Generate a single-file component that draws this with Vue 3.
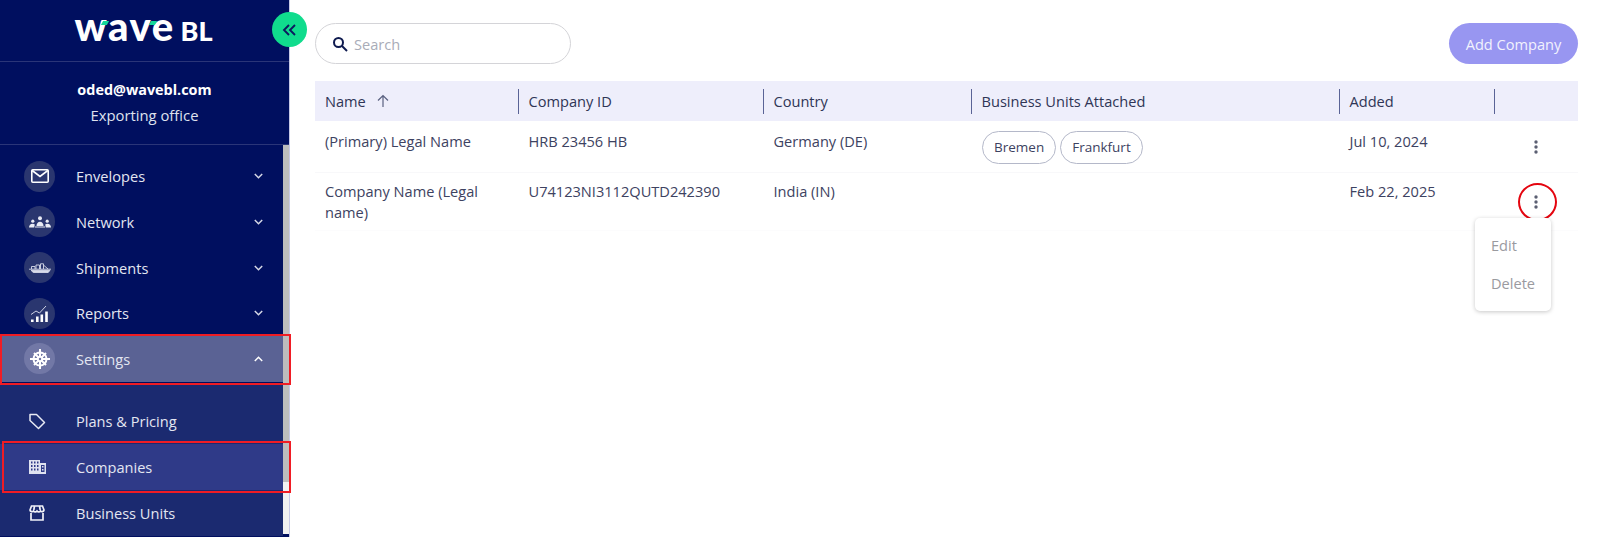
<script setup>
const upper = [
  { label: 'Envelopes', icon: 'mail' },
  { label: 'Network', icon: 'net' },
  { label: 'Shipments', icon: 'ship' },
  { label: 'Reports', icon: 'chart' },
]
const rows = [
  { name: '(Primary) Legal Name', id: 'HRB 23456 HB', country: 'Germany (DE)', units: ['Bremen', 'Frankfurt'], added: 'Jul 10, 2024' },
  { name: 'Company Name (Legal name)', id: 'U74123NI3112QUTD242390', country: 'India (IN)', units: [], added: 'Feb 22, 2025' },
]
</script>

<template>
  <div class="page">
    <aside class="side">
      <div class="logo">
        <span class="wave">wave</span><span class="bl">BL</span>
        <i class="tick t1"></i><i class="tick t3"></i>
      </div>
      <div class="user">
        <div class="mail">oded@wavebl.com</div>
        <div class="office">Exporting office</div>
      </div>
      <div class="scrollarea">
        <nav class="nav">
          <a v-for="m in upper" :key="m.label" class="item">
            <span class="disc">
              <svg v-if="m.icon === 'mail'" width="18" height="14" viewBox="0 0 18 14" fill="none" stroke="#fff" stroke-width="1.600"><rect x=".8" y=".8" width="16.400" height="12.400" rx="1"/><path d="M1.200 1.500L9 7.500l7.800-6"/></svg>
              <svg v-else-if="m.icon === 'net'" width="22" height="12" viewBox="0 0 22 12" fill="#e8eaf4"><circle cx="11" cy="2.300" r="2"/><path d="M7.500 10c0-2.500 1.500-4.200 3.500-4.200s3.500 1.700 3.500 4.200z"/><circle cx="3.800" cy="5.200" r="1.600"/><path d="M0 11.500c0-2.400 1.500-3.800 3.500-3.800 1 0 1.700.3 2.300.8l-.6 3z"/><circle cx="18.200" cy="5.200" r="1.600"/><path d="M22 11.500c0-2.400-1.500-3.800-3.500-3.800-1 0-1.700.3-2.300.8l.6 3z"/><rect x="6" y="10.500" width="10" height="1"/></svg>
              <svg v-else-if="m.icon === 'ship'" width="22" height="10" viewBox="0 0 22 10" fill="none" stroke="#d9dcea" stroke-width=".9"><path d="M0 6.200h22"/><path d="M2.500 6V3.500h3.500V6M7 6V2h3.500v4M11.500 6V.8h3V6"/><path d="M15 2.500l4 3.500"/><path d="M2 7.300h19l-2 2.400H4.500z" fill="#d9dcea"/></svg>
              <svg v-else width="17" height="17" viewBox="0 0 17 17" fill="#fff"><rect x="0" y="14.500" width="2.600" height="2.500"/><rect x="5" y="11.500" width="2.600" height="5.500"/><rect x="9.500" y="9.500" width="2.600" height="7.500"/><rect x="14.200" y="6.500" width="2.600" height="10.500"/><path d="M0 9.500l5-3.500 3.500 2L15 1" fill="none" stroke="#cfd2e4" stroke-width="1"/></svg>
            </span>
            <span class="label">{{ m.label }}</span>
            <svg class="chev" width="9" height="6" viewBox="0 0 9 6" fill="none" stroke="#d5d8e6" stroke-width="1.500"><path d="M.8 1l3.700 3.700L8.200 1"/></svg>
          </a>
          <a class="item open">
            <span class="disc">
              <svg width="22" height="22" viewBox="0 0 22 22" fill="none" stroke="#fff"><circle cx="11" cy="11" r="6.500" stroke-width="2"/><circle cx="11" cy="11" r="2.200" stroke-width="2"/><path d="M11 1v8M11 13v8M1 11h8M13 11h8M5 5l4.500 4.500M12.500 12.500L17 17M17 5l-4.500 4.500M9.500 12.500L5 17" stroke-width="2"/></svg>
            </span>
            <span class="label">Settings</span>
            <svg class="chev" width="9" height="6" viewBox="0 0 9 6" fill="none" stroke="#fff" stroke-width="1.500"><path d="M.8 5l3.700-3.700L8.200 5"/></svg>
          </a>
          <div class="sub">
            <a class="subitem">
              <span class="subicon"><svg width="17" height="17" viewBox="0 0 17 17" fill="none" stroke="#e8eaf4" stroke-width="1.500"><path d="M1 1.500h6.500l8 8-6 6-8.500-8z" stroke-linejoin="round"/></svg></span>
              <span class="label">Plans &amp; Pricing</span>
            </a>
            <a class="subitem current">
              <span class="subicon"><svg width="17" height="14" viewBox="0 0 17 14" fill="#dfe2f0"><path d="M0 0h11v3h6v11H0zM2 1.500v2h1.500v-2zm3 0v2h1.500v-2zm3 0v2h1.500v-2zM2 5v2h1.500V5zm3 0v2h1.500V5zm3 0v2h1.500V5zM2 8.500v2h1.500v-2zm3 0v2h1.500v-2zm3 0v2h1.500v-2zM12 5v7h3.500V5zm1 1h1.500v1.500H13zm0 3h1.500v1.500H13z" fill-rule="evenodd"/></svg></span>
              <span class="label">Companies</span>
            </a>
            <a class="subitem">
              <span class="subicon"><svg width="16" height="16" viewBox="0 0 16 16" fill="none" stroke="#f0f1f7" stroke-width="1.700"><path d="M2.500 1h11L15 5a2 2 0 0 1-3.500 1 2.100 2.100 0 0 1-3.500 0 2.100 2.100 0 0 1-3.500 0A2 2 0 0 1 1 5z"/><path d="M2 8v7h12V8"/><path d="M5.500 1L4.800 5M10.500 1l.7 4"/></svg></span>
              <span class="label">Business Units</span>
            </a>
          </div>
        </nav>
        <div class="scrollbar"><div class="thumb"></div></div>
      </div>
      <div class="mark mark-settings"></div>
      <div class="mark mark-companies"></div>
    </aside>

    <button class="collapse" aria-label="Collapse">
      <svg width="15" height="12" viewBox="0 0 15 12" fill="none" stroke="#0b1a5e" stroke-width="1.900"><path d="M7 1L2 6l5 5M13 1L8 6l5 5"/></svg>
    </button>

    <main class="main">
      <div class="bar">
        <label class="search">
          <svg width="16" height="16" viewBox="0 0 16 16" fill="none" stroke="#0e1a4f" stroke-width="2"><circle cx="6.500" cy="6.500" r="4.500"/><path d="M10 10l5 5"/></svg>
          <span>Search</span>
        </label>
        <button class="add">Add Company</button>
      </div>

      <div class="table">
        <div class="head">
          <div class="th first">Name
            <svg width="14" height="14" viewBox="0 0 14 14" fill="none" stroke="#5a6180" stroke-width="1.200"><path d="M7 13V1.500M2 6.500l5-5 5 5"/></svg>
          </div>
          <div class="th">Company ID</div>
          <div class="th">Country</div>
          <div class="th">Business Units Attached</div>
          <div class="th">Added</div>
          <div class="th last"></div>
        </div>
        <div v-for="(r, i) in rows" :key="r.id" class="row" :class="'row' + i">
          <div class="td first">{{ r.name }}</div>
          <div class="td">{{ r.id }}</div>
          <div class="td">{{ r.country }}</div>
          <div class="td chips"><span v-for="u in r.units" :key="u" class="chip">{{ u }}</span></div>
          <div class="td">{{ r.added }}</div>
          <div class="td kebab"><svg width="4" height="14" viewBox="0 0 4 14" fill="#5b5f72"><circle cx="2" cy="2" r="1.700"/><circle cx="2" cy="7" r="1.700"/><circle cx="2" cy="12" r="1.700"/></svg></div>
        </div>
      </div>
      <div class="ring"></div>
      <div class="menu">
        <div>Edit</div>
        <div>Delete</div>
      </div>
    </main>
  </div>
</template>

<style scoped>
.page { display: flex; width: 1600px; height: 537px; overflow: hidden; position: relative; font-family: "Open Sans", "Noto Sans", sans-serif; background: #fff; color: #2f3556; }
.side { width: 289px; flex: none; height: 537px; background: #000f5f; color: #fff; display: flex; flex-direction: column; position: relative; border-right: 1px solid #c7c9e6; }
.logo { height: 62px; flex: none; box-sizing: border-box; border-bottom: 1px solid #2a3578; display: flex; justify-content: center; align-items: baseline; gap: 6px; padding-top: 8px; padding-right: 2px; position: relative; font-family: Lato, sans-serif; font-weight: 900; line-height: 36px; }
.wave { font-size: 40px; letter-spacing: 1.500px; }
.bl { font-size: 27px; }
.tick { position: absolute; width: 6px; height: 4px; background: #14d79a; top: 21px; transform: skewX(-30deg); }
.t1 { left: 102px; } .t3 { left: 150px; }
.user { height: 83px; flex: none; box-sizing: border-box; border-bottom: 1px solid #2a3578; text-align: center; padding-top: 16px; }
.mail { font-size: 14.400px; font-weight: 700; line-height: 24px; }
.office { font-size: 14.800px; line-height: 27px; color: #dfe2ee; }
.scrollarea { flex: 1; display: flex; min-height: 0; }
.nav { flex: 1; display: flex; flex-direction: column; padding-top: 8px; }
.item { height: 46px; flex: none; display: flex; align-items: center; padding-left: 24px; padding-right: 20px; box-sizing: border-box; margin-bottom: -.2px; }
.disc { width: 31px; height: 31px; border-radius: 50%; background: #2a366f; display: flex; align-items: center; justify-content: center; flex: none; margin-right: 21px; }
.label { font-size: 14.600px; color: #e3e6f1; flex: 1; font-weight: 500; }
.item.open { background: #5a6294; height: 47px; margin-top: -1.200px; margin-bottom: 0; }
.item.open .disc { background: #7278a6; }
.sub { background: #1b2a70; flex: 1; padding-top: 15px; margin-top: 1px; margin-bottom: 3px; }
.subitem { height: 46px; display: flex; align-items: center; padding-left: 29px; box-sizing: border-box; }
.subitem.current { background: #2f3a88; }
.subicon { width: 17px; display: flex; margin-right: 30px; flex: none; }
.scrollbar { width: 6px; flex: none; background: #f1f1f1; margin-bottom: 3px; }
.thumb { height: 337px; background: #bdbdbd; }
.mark { position: absolute; border: 2px solid #f01c24; box-sizing: border-box; pointer-events: none; }
.mark-settings { left: 0; top: 334px; width: 291px; height: 51px; }
.mark-companies { left: 2px; top: 441px; width: 289px; height: 52px; }
.collapse { position: absolute; left: 272px; top: 12px; width: 35px; height: 35px; border-radius: 50%; background: #10dc8d; border: 0; padding: 0; display: flex; align-items: center; justify-content: center; z-index: 2; }
.main { flex: 1; padding: 23px 22px 0 25px; position: relative; min-width: 0; }
.bar { display: flex; justify-content: space-between; height: 41px; margin-bottom: 17px; }
.search { width: 256px; box-sizing: border-box; border: 1px solid #d4d4d8; border-radius: 21px; display: flex; align-items: center; gap: 6px; padding-left: 16px; font-size: 14.600px; color: #a9acb8; }
.add { width: 129px; border: 0; border-radius: 21px; background: #9896f1; color: #f2f2fd; font: 14.600px "Open Sans", sans-serif; padding: 0; }
.table { font-size: 14.600px; }
.head, .row { display: grid; grid-template-columns: 203px 245px 208px 368px 155px 84px; }
.head { height: 40px; background: #eeeefb; align-items: center; }
.th { height: 25px; line-height: 25px; border-left: 1.500px solid #5a6396; padding-left: 9.500px; color: #2f3556; display: flex; align-items: center; gap: 10px; box-sizing: border-box; }
.th.first { border-left: 0; padding-left: 10px; }
.th.last { margin-right: 1px; }
.row { border-bottom: 1px solid #f8f8fa; box-sizing: border-box; }
.row0 { height: 52px; }
.row1 { height: 58px; border-bottom-color: #fcfcfd; }
.td { padding: 10px 10px 0 10.500px; line-height: 21px; color: #3d4261; }
.td.first { padding-left: 10px; }
.row1 .td { padding-top: 8px; }
.td.chips { display: flex; gap: 4px; padding-top: 10px; padding-left: 11px; align-items: flex-start; }
.chip { height: 33px; box-sizing: border-box; border: 1px solid #b4b8c9; border-radius: 17px; padding: 0 11px; line-height: 31px; font-size: 13.500px; color: #3d4261; }
.td.kebab { padding: 19px 0 0 40px; }
.kebab svg { display: block; }
.row1 .td.kebab { padding-top: 22px; }
.ring { position: absolute; left: 1228px; top: 183px; width: 39px; height: 38px; box-sizing: border-box; border: 2px solid #e4050f; border-radius: 50%; }
.menu { position: absolute; left: 1185px; top: 218px; width: 76px; height: 93px; background: #fff; border-radius: 5px; box-shadow: 0 1px 4px rgba(0,0,0,.22); box-sizing: border-box; padding: 8px 0 0 16px; font-size: 14.600px; line-height: 38px; color: #9a9a9f; }
</style>
<style>
html, body { margin: 0; overflow: hidden; }
</style>
